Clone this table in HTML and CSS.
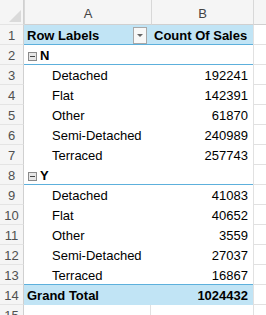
FILE: index.html
```html
<!DOCTYPE html>
<html>
<head>
<meta charset="utf-8">
<link rel="stylesheet" href="styles.css">
</head>
<body>
<div class="sheet">
  <div class="row colhead">
    <div class="rn corner"><span class="tri"></span></div>
    <div class="ch">A</div>
    <div class="ch">B</div>
    <div class="ch last"></div>
  </div>
  <div class="row">
    <div class="rn">1</div>
    <div class="a hdr blue line"><span>Row Labels</span><span class="dd"><span class="arrow"></span></span></div>
    <div class="b hdr blue line left">Count Of Sales</div>
    <div class="c"></div>
  </div>
  <div class="row">
    <div class="rn">2</div>
    <div class="a grp line"><span class="box"></span>N</div>
    <div class="b line"></div>
    <div class="c"></div>
  </div>
  <div class="row"><div class="rn">3</div><div class="a sub">Detached</div><div class="b">192241</div><div class="c"></div></div>
  <div class="row"><div class="rn">4</div><div class="a sub">Flat</div><div class="b">142391</div><div class="c"></div></div>
  <div class="row"><div class="rn">5</div><div class="a sub">Other</div><div class="b">61870</div><div class="c"></div></div>
  <div class="row"><div class="rn">6</div><div class="a sub">Semi-Detached</div><div class="b">240989</div><div class="c"></div></div>
  <div class="row"><div class="rn">7</div><div class="a sub">Terraced</div><div class="b">257743</div><div class="c"></div></div>
  <div class="row">
    <div class="rn">8</div>
    <div class="a grp line"><span class="box"></span>Y</div>
    <div class="b line"></div>
    <div class="c"></div>
  </div>
  <div class="row"><div class="rn">9</div><div class="a sub">Detached</div><div class="b">41083</div><div class="c"></div></div>
  <div class="row"><div class="rn">10</div><div class="a sub">Flat</div><div class="b">40652</div><div class="c"></div></div>
  <div class="row"><div class="rn">11</div><div class="a sub">Other</div><div class="b">3559</div><div class="c"></div></div>
  <div class="row"><div class="rn">12</div><div class="a sub">Semi-Detached</div><div class="b">27037</div><div class="c"></div></div>
  <div class="row"><div class="rn">13</div><div class="a sub line">Terraced</div><div class="b line">16867</div><div class="c"></div></div>
  <div class="row"><div class="rn">14</div><div class="a hdr blue">Grand Total</div><div class="b hdr blue">1024432</div><div class="c"></div></div>
  <div class="row"><div class="rn">15</div><div class="a empty"></div><div class="b empty"></div><div class="c"></div></div>
</div>
</body>
</html>
```
FILE: styles.css
```css
html, body {
  margin: 0;
  padding: 0;
  background: #ffffff;
  overflow: hidden;
}
.sheet {
  width: 266px;
  height: 315px;
  overflow: hidden;
  font-family: "Liberation Sans", Arial, sans-serif;
  font-size: 13px;
  color: #000;
}
.row {
  display: grid;
  grid-template-columns: 24px 127px 102px 13px;
  height: 20px;
}
.row > div {
  box-sizing: border-box;
  height: 20px;
  padding-top: 3px;
  line-height: 16px;
  white-space: nowrap;
  overflow: hidden;
  border-bottom: 1px solid #ffffff;
}
.colhead {
  height: 25px;
}
.colhead > div {
  height: 25px;
  background: #f5f5f5;
  border-bottom: 1px solid #d0d0d0;
  color: #444;
  text-align: center;
  padding-top: 6px;
}
.colhead > .ch {
  border-left: 1px solid #d8d8d8;
}
.corner {
  position: relative;
}
.tri {
  position: absolute;
  right: 2px;
  bottom: 2px;
  width: 0;
  height: 0;
  border-left: 12px solid transparent;
  border-bottom: 12px solid #dadada;
}
.row > .rn {
  background: #f5f5f5;
  color: #505050;
  text-align: center;
  border-right: 1px solid #d0d0d0;
  border-bottom: 1px solid #e4e4e4;
}
.a {
  padding-left: 3px;
}
.b {
  text-align: right;
  padding-right: 5px;
}
.b.left {
  text-align: left;
  padding-left: 3px;
}
.row > .c {
  border-left: 1px solid #e1e1e1;
  border-bottom: 1px solid #e1e1e1;
}
.hdr {
  font-weight: bold;
}
.blue {
  background: #c1e4f5;
}
.row > .blue {
  border-bottom-color: #c1e4f5;
}
.row > .line {
  border-bottom: 1px solid #5db0dc;
}
.row > .a.hdr:has(.dd) {
  display: flex;
  justify-content: space-between;
  align-items: flex-start;
  padding-right: 4px;
}
.dd {
  box-sizing: border-box;
  width: 14px;
  height: 17px;
  margin-top: -1px;
  border: 1px solid #a8a8a8;
  background: #f8f8f8;
  display: flex;
  align-items: center;
  justify-content: center;
}
.arrow {
  width: 0;
  height: 0;
  border-left: 3px solid transparent;
  border-right: 3px solid transparent;
  border-top: 3px solid #666;
}
.grp {
  font-weight: bold;
  display: flex;
  align-items: flex-start;
}
.box {
  box-sizing: border-box;
  width: 9px;
  height: 9px;
  border: 1px solid #8a8a8a;
  background: #e6e6e6;
  margin: 4px 3px 0 1px;
  position: relative;
}
.box::after {
  content: "";
  position: absolute;
  left: 1px;
  right: 1px;
  top: 3px;
  height: 1px;
  background: #444;
}
.sub {
  padding-left: 28px;
}
.row > .empty {
  border-bottom: 1px solid #e1e1e1;
}
.row > .a.empty {
  border-right: 1px solid #e1e1e1;
}
```
